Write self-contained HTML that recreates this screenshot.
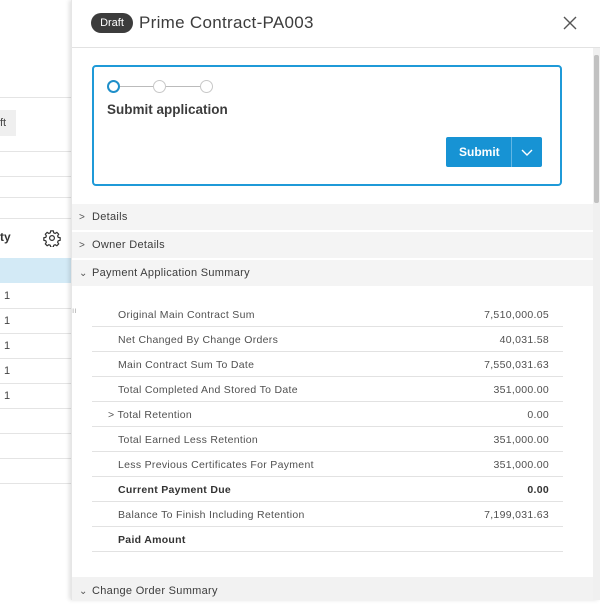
<!DOCTYPE html>
<html><head><style>
*{margin:0;padding:0;box-sizing:border-box}
body{width:600px;height:600px;overflow:hidden;background:#fff;font-family:"Liberation Sans",sans-serif;position:relative;color:#3c3c3c}
.abs{position:absolute}
.hl{position:absolute;left:0;width:71px;height:1px;background:#e4e4e4}
.one{position:absolute;left:4px;font-size:11px;color:#444}
.panel{position:absolute;left:71px;top:0;width:529px;height:600px;background:#fff;box-shadow:-2px 0 4px rgba(0,0,0,.12);border-left:1px solid #e6e6e6}
.sec{position:absolute;left:0;width:521px;height:26px;background:#f4f4f4;font-size:11px;color:#3c3c3c;line-height:27px;padding-left:20px;letter-spacing:.3px}
.sec .ic{position:absolute;left:7px;top:0;font-size:10px;color:#555}
.row{position:absolute;left:20px;width:471px;height:25px;border-bottom:1px solid #e2e2e2;font-size:10.5px;line-height:27px;color:#505050;letter-spacing:.3px}
.row .l{position:absolute;left:26px}
.row .v{position:absolute;right:14px}
.row.b{font-weight:bold;color:#333}
</style></head><body>
<div class="hl" style="top:97px"></div>
<div class="abs" style="left:0;top:110px;width:16px;height:26px;background:#efefef;font-size:11px;line-height:26px;color:#444">ft</div>
<div class="hl" style="top:151px"></div>
<div class="hl" style="top:176px"></div>
<div class="hl" style="top:197px"></div>
<div class="hl" style="top:218px"></div>
<div class="abs" style="left:0;top:230px;font-size:12px;font-weight:bold;color:#333">ty</div>
<svg class="abs" style="left:43px;top:229px" width="18" height="18" viewBox="0 0 24 24" fill="none" stroke="#333" stroke-width="1.6"><circle cx="12" cy="12" r="3.2"/><path d="M10.3 2.5h3.4l.6 2.6 1.9.8 2.3-1.4 2.4 2.4-1.4 2.3.8 1.9 2.6.6v3.4l-2.6.6-.8 1.9 1.4 2.3-2.4 2.4-2.3-1.4-1.9.8-.6 2.6h-3.4l-.6-2.6-1.9-.8-2.3 1.4-2.4-2.4 1.4-2.3-.8-1.9-2.6-.6v-3.4l2.6-.6.8-1.9-1.4-2.3 2.4-2.4 2.3 1.4 1.9-.8z"/></svg>
<div class="abs" style="left:0;top:258px;width:71px;height:25px;background:#d3eaf6"></div>
<div class="one" style="top:290px">1</div><div class="hl" style="top:308px"></div>
<div class="one" style="top:315px">1</div><div class="hl" style="top:333px"></div>
<div class="one" style="top:340px">1</div><div class="hl" style="top:358px"></div>
<div class="one" style="top:365px">1</div><div class="hl" style="top:383px"></div>
<div class="one" style="top:390px">1</div><div class="hl" style="top:408px"></div>
<div class="hl" style="top:433px"></div>
<div class="hl" style="top:458px"></div>
<div class="hl" style="top:483px"></div>

<div class="panel">
  <div class="abs" style="left:19px;top:13px;width:42px;height:20px;border-radius:10px;background:#3c3c3c;color:#fff;font-size:11px;line-height:20px;text-align:center">Draft</div>
  <div class="abs" style="left:67px;top:13px;font-size:17px;color:#3c3c3c;letter-spacing:.3px">Prime Contract-PA003</div>
  <svg class="abs" style="left:491px;top:16px" width="14" height="14" viewBox="0 0 14 14" stroke="#555" stroke-width="1.4"><path d="M1 1L13 13M13 1L1 13"/></svg>
  <div class="abs" style="left:0;top:47px;width:528px;height:1px;background:#e2e2e2"></div>
  <div class="abs" style="left:521px;top:48px;width:7px;height:552px;background:#f0f0f0"></div>
  <div class="abs" style="left:522px;top:55px;width:5px;height:148px;background:#c1c1c1;border-radius:2px"></div>
  <div class="abs" style="left:20px;top:65px;width:470px;height:121px;border:2px solid #1f9ad8;border-radius:4px"></div>
  <div class="abs" style="left:35px;top:80px;width:13px;height:13px;border:2px solid #1f8fc9;border-radius:50%"></div>
  <div class="abs" style="left:48px;top:86px;width:33px;height:1px;background:#bbb"></div>
  <div class="abs" style="left:81px;top:80px;width:13px;height:13px;border:1.5px solid #c8c8c8;border-radius:50%"></div>
  <div class="abs" style="left:94px;top:86px;width:34px;height:1px;background:#bbb"></div>
  <div class="abs" style="left:128px;top:80px;width:13px;height:13px;border:1.5px solid #c8c8c8;border-radius:50%"></div>
  <div class="abs" style="left:35px;top:102px;font-size:13.5px;font-weight:bold;color:#3c3c3c">Submit application</div>
  <div class="abs" style="left:374px;top:137px;width:96px;height:30px;background:#1793d4;border-radius:2px"></div>
  <div class="abs" style="left:387px;top:145px;font-size:12px;font-weight:bold;color:#fff">Submit</div>
  <div class="abs" style="left:439px;top:137px;width:1px;height:30px;background:#62b6e4"></div>
  <svg class="abs" style="left:449px;top:147px" width="12" height="10" viewBox="0 0 12 10" fill="none" stroke="#fff" stroke-width="1.4"><path d="M1 3l5 5 5-5"/></svg>
  <div class="sec" style="top:204px"><span class="ic">&gt;</span>Details</div>
  <div class="sec" style="top:232px"><span class="ic">&gt;</span>Owner Details</div>
  <div class="sec" style="top:260px"><span class="ic">&#8964;</span>Payment Application Summary</div>
  <div class="abs" style="left:0;top:286px;width:521px;height:291px;background:#fff"></div>
  <div class="abs" style="left:0;top:306px;font-size:8px;color:#aaa">ıı</div>
  <div class="row" style="top:302px"><span class="l">Original Main Contract Sum</span><span class="v">7,510,000.05</span></div>
  <div class="row" style="top:327px"><span class="l">Net Changed By Change Orders</span><span class="v">40,031.58</span></div>
  <div class="row" style="top:352px"><span class="l">Main Contract Sum To Date</span><span class="v">7,550,031.63</span></div>
  <div class="row" style="top:377px"><span class="l">Total Completed And Stored To Date</span><span class="v">351,000.00</span></div>
  <div class="row" style="top:402px"><span class="l" style="left:16px">&gt; Total Retention</span><span class="v">0.00</span></div>
  <div class="row" style="top:427px"><span class="l">Total Earned Less Retention</span><span class="v">351,000.00</span></div>
  <div class="row" style="top:452px"><span class="l">Less Previous Certificates For Payment</span><span class="v">351,000.00</span></div>
  <div class="row b" style="top:477px"><span class="l">Current Payment Due</span><span class="v">0.00</span></div>
  <div class="row" style="top:502px"><span class="l">Balance To Finish Including Retention</span><span class="v">7,199,031.63</span></div>
  <div class="row b" style="top:527px"><span class="l">Paid Amount</span></div>
  <div class="sec" style="top:577px;height:23px;background:#f2f2f2;line-height:29px"><span class="ic">&#8964;</span>Change Order Summary</div>
</div>
</body></html>
